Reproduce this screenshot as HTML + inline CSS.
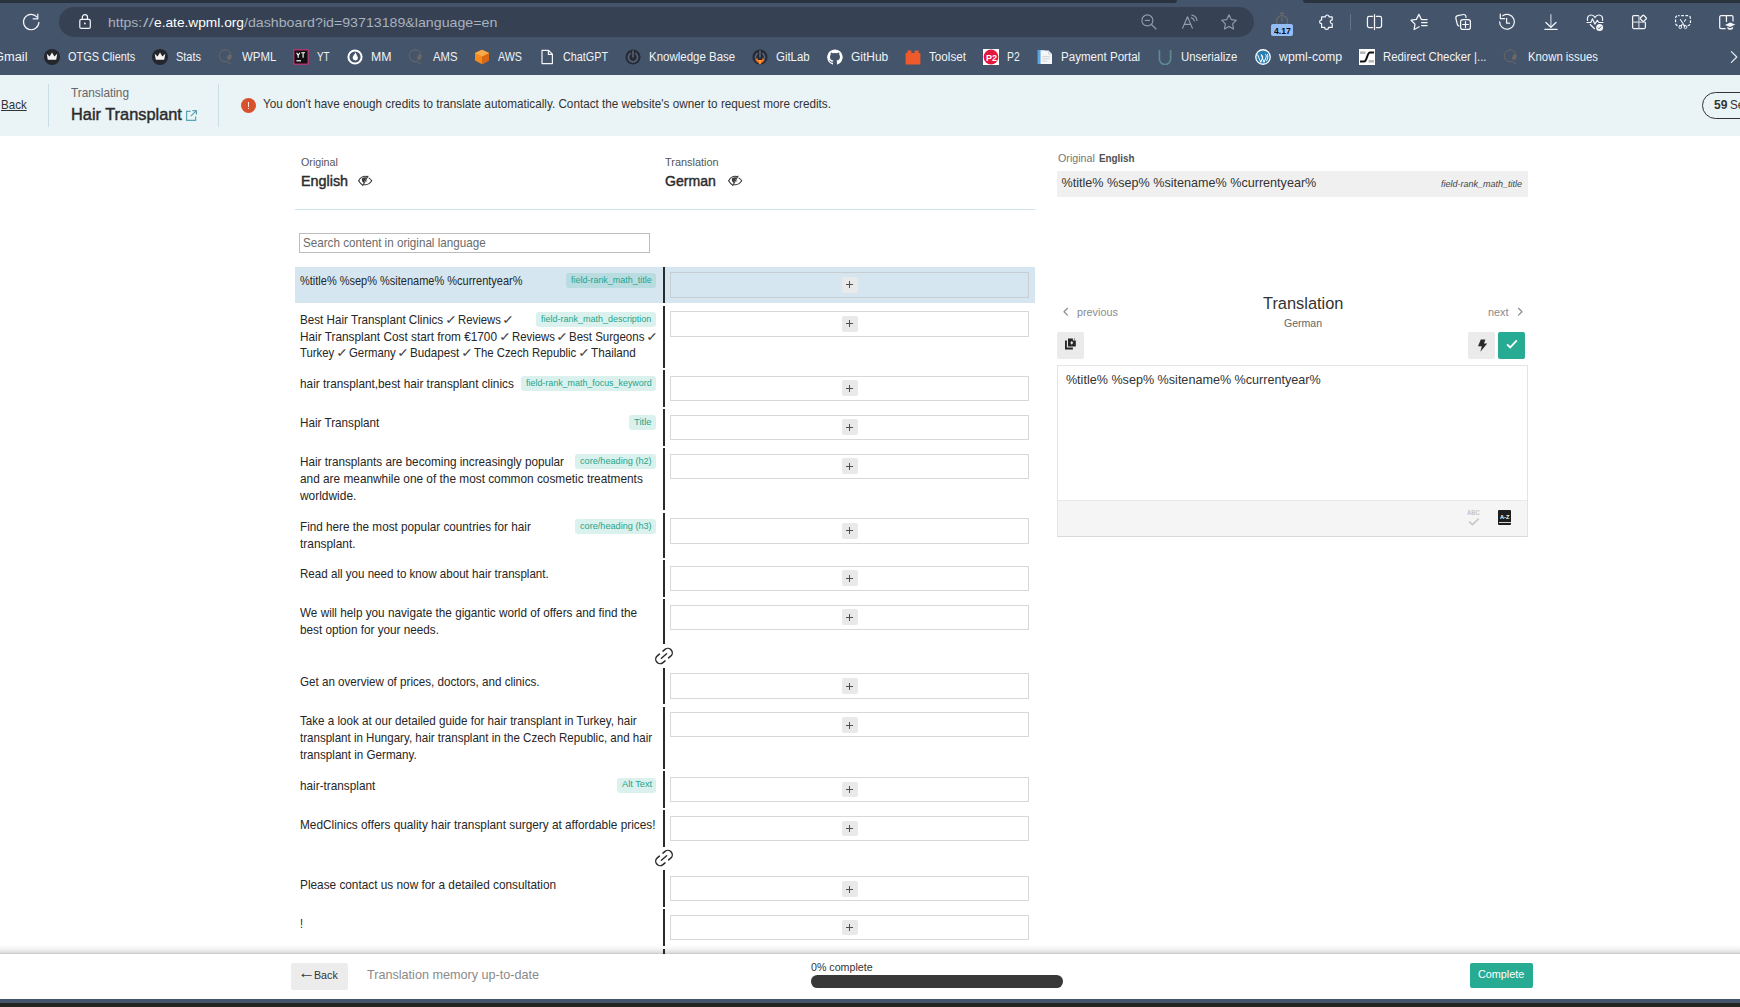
<!DOCTYPE html>
<html lang="en"><head><meta charset="utf-8"><title>Advanced Translation Editor - Hair Transplant</title>
<style>
html,body{margin:0;padding:0;}
body{width:1740px;height:1007px;overflow:hidden;position:relative;background:#fff;font-family:"Liberation Sans", "DejaVu Sans", sans-serif;}
#app{position:absolute;left:0;top:0;width:1740px;height:1007px;overflow:hidden;}
#app div, #app svg{position:absolute;box-sizing:border-box;}
#app span.t{position:absolute;white-space:pre;transform-origin:0 0;display:block;}
</style></head><body><div id="app">
<div style="left:0px;top:0px;width:1740px;height:75px;background:#44546b;"></div>
<div style="left:0px;top:0px;width:1177px;height:3px;background:#293340;border-radius:0 0 6px 0;"></div>
<div style="left:1303px;top:0px;width:437px;height:3px;background:#293340;border-radius:0 0 0 6px;"></div>
<div style="left:59px;top:7px;width:1195px;height:30px;background:#364254;border-radius:15px;"></div>
<svg style="left:19px;top:10px;" width="24" height="24" viewBox="0 0 24 24" fill="none"><path d="M18.1 7.05 A7.7 7.7 0 1 0 19.9 12.3" stroke="#f4f6f9" stroke-width="1.2" stroke-linecap="round"/><path d="M18.8 4.1 V8.85 H14.1" stroke="#f4f6f9" stroke-width="1.2" stroke-linecap="round" stroke-linejoin="round"/></svg>
<svg style="left:77px;top:12px;" width="16" height="20" viewBox="0 0 16 20" fill="none"><rect x="2.8" y="7.45" width="10.5" height="8.95" rx="1.5" stroke="#f4f6f9" stroke-width="1.2"/><path d="M5.3 7.4 V5.3 a2.6 2.6 0 0 1 5.2 0 V7.4" stroke="#f4f6f9" stroke-width="1.2"/><circle cx="7.9" cy="11.5" r="0.9" fill="#f4f6f9"/></svg>
<svg style="left:1139px;top:12px;" width="20" height="20" viewBox="0 0 20 20" fill="none"><circle cx="8.4" cy="8.4" r="5.5" stroke="#959eab" stroke-width="1.1"/><path d="M12.5 12.5 L17 17" stroke="#959eab" stroke-width="1.15" stroke-linecap="round"/><path d="M5.8 8.4 H11" stroke="#959eab" stroke-width="1.1"/></svg>
<svg style="left:1180px;top:12px;" width="20" height="20" viewBox="0 0 20 20" fill="none"><path d="M2.6 16.2 L7.5 4.8 L12.4 16.2 M4.3 12.4 H10.7" stroke="#959eab" stroke-width="1.1" stroke-linejoin="round" stroke-linecap="round"/><path d="M11.2 5.8 a3.8 3.8 0 0 1 3 3.2 M11.8 3 a6.6 6.6 0 0 1 5.2 5.6" stroke="#959eab" stroke-width="1.1" stroke-linecap="round"/></svg>
<svg style="left:1219px;top:12px;" width="20" height="20" viewBox="0 0 20 20" fill="none"><path d="M10 2.8 L12.2 7.6 L17.4 8.2 L13.6 11.8 L14.6 17 L10 14.4 L5.4 17 L6.4 11.8 L2.6 8.2 L7.8 7.6 Z" stroke="#959eab" stroke-width="1.1" stroke-linejoin="round"/></svg>
<svg style="left:1273px;top:11px;" width="18" height="16" viewBox="0 0 18 16" fill="none"><circle cx="9" cy="10.2" r="5.6" stroke="#6b6a6c" stroke-width="1.2"/><path d="M9 2.4 V4.4 M7.4 2.2 H10.6 M9 6.8 V10.2" stroke="#6b6a6c" stroke-width="1.2" stroke-linecap="round"/></svg>
<div style="left:1271px;top:24px;width:22.4px;height:11.8px;background:#94bdf6;border-radius:2px;"></div>
<svg style="left:1316px;top:12px;" width="20" height="20" viewBox="0 0 20 20" fill="none"><path d="M5.6 4.9 H9.3 a1.9 1.9 0 1 1 3.8 0 H16.2 V7.9 a1.9 1.9 0 1 0 0 3.8 V15.4 H12.5 a1.9 1.9 0 1 1 -3.8 0 H5.6 V11.7 a1.9 1.9 0 1 1 0 -3.8 Z" stroke="#f4f6f9" stroke-width="1.2" stroke-linejoin="round"/></svg>
<div style="left:1350px;top:14px;width:1px;height:16px;background:#66748a;"></div>
<svg style="left:1364px;top:12px;" width="21" height="20" viewBox="0 0 21 20" fill="none"><path d="M8.6 4.45 H5.2 a1.75 1.75 0 0 0 -1.75 1.75 v7.6 a1.75 1.75 0 0 0 1.75 1.75 H8.6 M12.4 4.45 h3.4 a1.75 1.75 0 0 1 1.75 1.75 v7.6 a1.75 1.75 0 0 1 -1.75 1.75 H12.4 M10.5 2.5 V17.5" stroke="#f4f6f9" stroke-width="1.25" stroke-linecap="round"/></svg>
<svg style="left:1409px;top:12px;" width="21" height="20" viewBox="0 0 21 20" fill="none"><path d="M18.1 7.5 H12.4 L9.9 2.4 L7.4 7.4 L2.1 8.2 L6 12.1 L5.1 17.5 L10.2 14.8" stroke="#f4f6f9" stroke-width="1.25" stroke-linejoin="round" stroke-linecap="round"/><path d="M12.6 10.6 H18.1 M12.6 13.6 H18.1" stroke="#f4f6f9" stroke-width="1.25" stroke-linecap="round"/></svg>
<svg style="left:1453px;top:12px;" width="21" height="20" viewBox="0 0 21 20" fill="none"><rect x="7.6" y="7.6" width="9.8" height="9.8" rx="2.2" stroke="#f4f6f9" stroke-width="1.25"/><path d="M12.5 9.6 v5.8 M9.6 12.5 h5.8" stroke="#f4f6f9" stroke-width="1.2" stroke-linecap="round"/><path d="M13 5.6 C13 3.5 12.2 2.3 10.5 2.5 L4.7 3.7 C3.1 4.1 2.6 5.1 2.9 6.5 L4.2 12 C4.5 13.3 5 13.8 5.9 13.9" stroke="#f4f6f9" stroke-width="1.2" stroke-linecap="round"/></svg>
<svg style="left:1497px;top:12px;" width="20" height="20" viewBox="0 0 20 20" fill="none"><path d="M5.76 3.74 A7.4 7.4 0 1 1 2.6 9.8" stroke="#f4f6f9" stroke-width="1.25" stroke-linecap="round"/><path d="M3.3 2.2 V6.6 H7.7" stroke="#f4f6f9" stroke-width="1.25" stroke-linecap="round" stroke-linejoin="round"/><path d="M9.6 6.3 V11.2 H12.5" stroke="#f4f6f9" stroke-width="1.25" stroke-linecap="round" stroke-linejoin="round"/></svg>
<svg style="left:1541px;top:12px;" width="20" height="20" viewBox="0 0 20 20" fill="none"><path d="M9.9 2.7 V15" stroke="#b9c0cb" stroke-width="1.3" stroke-linecap="round"/><path d="M4.9 10.5 L9.9 15.3 L15 10.5 M3.9 17.4 H16.1" stroke="#f4f6f9" stroke-width="1.25" stroke-linecap="round" stroke-linejoin="round"/></svg>
<svg style="left:1585px;top:12px;" width="21" height="20" viewBox="0 0 21 20" fill="none"><path d="M2.5 8.4 C1.9 5 3.6 3 6.1 3 C7.8 3 9.2 3.9 10 5.4 C10.8 3.9 12.2 3 13.9 3 C16.4 3 18.1 5 17.5 8.4" stroke="#f4f6f9" stroke-width="1.2" stroke-linecap="round"/><path d="M2 10.5 H5.9 L7.5 6.8 L9.8 12.1 L12.3 8.4 L13.9 10.5 H18" stroke="#f4f6f9" stroke-width="1.2" stroke-linecap="round" stroke-linejoin="round"/><path d="M5.2 12.55 L9.5 16.7" stroke="#f4f6f9" stroke-width="1.2" stroke-linecap="round"/><circle cx="14.6" cy="15.5" r="3.5" fill="#f4f6f9"/><path d="M13 15.6 L14.1 16.7 L16.2 14.4" stroke="#44546b" stroke-width="1"/></svg>
<svg style="left:1629px;top:12px;" width="21" height="20" viewBox="0 0 21 20" fill="none"><path d="M9.9 3.7 H4.8 a1.2 1.2 0 0 0 -1.2 1.2 V15.3 a1.2 1.2 0 0 0 1.2 1.2 H15.2 a1.2 1.2 0 0 0 1.2 -1.2 V10" stroke="#f4f6f9" stroke-width="1.25"/><path d="M9.9 3.7 V16.5 M3.6 10 H16.4" stroke="#c3c9d3" stroke-width="1.25"/><rect x="11.85" y="3.9" width="4.9" height="4.9" rx="0.9" transform="rotate(45 14.3 6.35)" fill="#44546b" stroke="#f4f6f9" stroke-width="1.25"/></svg>
<svg style="left:1673px;top:12px;" width="21" height="20" viewBox="0 0 21 20" fill="none"><rect x="2.55" y="3.5" width="14.9" height="10.1" rx="2.6" stroke="#f4f6f9" stroke-width="1.25" stroke-dasharray="2.7 1.55" stroke-dashoffset="1.2"/><circle cx="7.3" cy="15.2" r="1.35" fill="#44546b" stroke="#f4f6f9" stroke-width="1"/><circle cx="12.5" cy="15.2" r="1.35" fill="#44546b" stroke="#f4f6f9" stroke-width="1"/><path d="M7.2 7.3 L11.9 14.2 M12.75 7.3 L11.3 9.6 M9.5 12.2 L8 14.2" stroke="#f4f6f9" stroke-width="1.1"/></svg>
<svg style="left:1717px;top:12px;" width="23" height="20" viewBox="0 0 23 20" fill="none"><path d="M9.45 3.7 V10 M9.45 3.7 H4 a1.3 1.3 0 0 0 -1.3 1.3 V15.2 a1.3 1.3 0 0 0 1.3 1.3 H8.6 M9.45 3.7 H14.7 a1.3 1.3 0 0 1 1.3 1.3 V9.6" stroke="#f4f6f9" stroke-width="1.25"/><path d="M8 13 L13.1 10.5 L18.3 12.6 L13.1 14.9 Z" fill="#f4f6f9"/><path d="M10.3 14.9 v1.3 c1.2 2.2 4.6 2.2 5.8 0 v-1.3 L13.1 16.2Z" fill="#f4f6f9"/></svg>
<svg style="left:43.8px;top:49px;" width="16" height="16" viewBox="0 0 16 16" fill="none"><circle cx="8" cy="8" r="8" fill="#23262b"/><path d="M2.7 4.7 L5.6 7.5 L8 3.5 L10.4 7.5 L13.3 4.7 L12.2 10.8 H3.8 Z" fill="#f4f4f4"/></svg>
<svg style="left:152px;top:49px;" width="16" height="16" viewBox="0 0 16 16" fill="none"><circle cx="8" cy="8" r="8" fill="#23262b"/><path d="M2.7 4.7 L5.6 7.5 L8 3.5 L10.4 7.5 L13.3 4.7 L12.2 10.8 H3.8 Z" fill="#f4f4f4"/></svg>
<svg style="left:218px;top:49px;" width="16" height="16" viewBox="0 0 16 16" fill="none"><path d="M12.7 4.2 A6 6 0 1 0 9.4 12.3 L11.4 14.6 L12.6 14.2" stroke="#6b6866" stroke-width="1" stroke-linecap="round"/><ellipse cx="11.5" cy="8" rx="2.1" ry="3.1" transform="rotate(22 11.5 8)" fill="#6b6866"/></svg>
<svg style="left:408px;top:49px;" width="16" height="16" viewBox="0 0 16 16" fill="none"><path d="M12.7 4.2 A6 6 0 1 0 9.4 12.3 L11.4 14.6 L12.6 14.2" stroke="#6b6866" stroke-width="1" stroke-linecap="round"/><ellipse cx="11.5" cy="8" rx="2.1" ry="3.1" transform="rotate(22 11.5 8)" fill="#6b6866"/></svg>
<svg style="left:1503px;top:49px;" width="16" height="16" viewBox="0 0 16 16" fill="none"><path d="M12.7 4.2 A6 6 0 1 0 9.4 12.3 L11.4 14.6 L12.6 14.2" stroke="#6b6866" stroke-width="1" stroke-linecap="round"/><ellipse cx="11.5" cy="8" rx="2.1" ry="3.1" transform="rotate(22 11.5 8)" fill="#6b6866"/></svg>
<svg style="left:293px;top:49px;" width="16" height="16" viewBox="0 0 16 16" fill="none"><rect x="0.9" y="0.9" width="14.2" height="14.2" fill="#111" stroke="#ee2f7c" stroke-width="1"/><path d="M3.6 3.8 L5.2 6.4 L6.8 3.8 M5.2 6.4 V8.8 M8.2 3.8 H12 M10.1 3.8 V8.8" stroke="#fff" stroke-width="1.1"/><path d="M3.4 11.8 H8" stroke="#fff" stroke-width="1.2"/></svg>
<svg style="left:346.5px;top:49px;" width="16" height="16" viewBox="0 0 16 16" fill="none"><circle cx="8" cy="8" r="6.6" stroke="#fff" stroke-width="2"/><path d="M8.6 3.2 C7.6 5.4 6 6.6 5.6 8.6 a2.7 2.7 0 0 0 5.3 0.8 C11.2 7.6 9.4 6.2 8.6 3.2Z" fill="#fff"/></svg>
<svg style="left:474px;top:49px;" width="16" height="16" viewBox="0 0 16 16" fill="none"><path d="M8 0.8 L15 4 V11.6 L8 15.2 L1 11.6 V4 Z" fill="#f58a1f"/><path d="M8 7.4 L15 4 V11.6 L8 15.2 Z" fill="#d86613"/><path d="M8 7.4 L1 4 L8 0.8 L15 4 Z" fill="#f9a94a"/></svg>
<svg style="left:538.5px;top:49px;" width="16" height="16" viewBox="0 0 16 16" fill="none"><path d="M3 1.4 H9.6 L13.4 5.2 V14.6 H3 Z M9.4 1.6 V5.4 H13.2" stroke="#f3f5f8" stroke-width="1.2" stroke-linejoin="round"/></svg>
<svg style="left:625px;top:49px;" width="16" height="16" viewBox="0 0 16 16" fill="none"><circle cx="8" cy="8" r="7.6" fill="#262b35"/><path d="M5.2 4.6 a4.6 4.6 0 1 0 5.6 0" stroke="#57627a" stroke-width="1.6" stroke-linecap="round"/><path d="M8 2.4 V8" stroke="#57627a" stroke-width="1.6" stroke-linecap="round"/></svg>
<svg style="left:752px;top:49px;" width="16" height="16" viewBox="0 0 16 16" fill="none"><circle cx="8" cy="8" r="7.6" fill="#262b35"/><path d="M5.2 4.6 a4.6 4.6 0 1 0 5.6 0" stroke="#57627a" stroke-width="1.6" stroke-linecap="round"/><path d="M8 2.4 V8" stroke="#57627a" stroke-width="1.6" stroke-linecap="round"/><path d="M8 15.4 L3.6 11.6 L5 8.4 L6.2 11 H9.8 L11 8.4 L12.4 11.6 Z" fill="#f26b26"/><path d="M8 15.4 L6.2 11 H9.8 Z" fill="#fca326"/></svg>
<svg style="left:827px;top:49px;" width="16" height="16" viewBox="0 0 16 16" fill="none"><path d="M8 0.4 a7.8 7.8 0 0 0 -2.5 15.2 c0.4 0.07 0.53 -0.17 0.53 -0.38 v-1.5 c-2.2 0.47 -2.63 -0.93 -2.63 -0.93 c-0.36 -0.9 -0.87 -1.15 -0.87 -1.15 c-0.7 -0.48 0.06 -0.47 0.06 -0.47 c0.78 0.05 1.2 0.8 1.2 0.8 c0.7 1.18 1.82 0.84 2.27 0.64 c0.07 -0.5 0.27 -0.84 0.5 -1.04 c-1.73 -0.2 -3.55 -0.87 -3.55 -3.85 c0 -0.85 0.3 -1.55 0.8 -2.1 c-0.08 -0.2 -0.35 -1 0.08 -2.07 c0 0 0.65 -0.2 2.15 0.8 a7.4 7.4 0 0 1 3.9 0 c1.5 -1 2.15 -0.8 2.15 -0.8 c0.43 1.07 0.16 1.87 0.08 2.07 c0.5 0.55 0.8 1.25 0.8 2.1 c0 3 -1.83 3.65 -3.57 3.85 c0.28 0.24 0.53 0.72 0.53 1.45 v2.15 c0 0.2 0.14 0.46 0.54 0.38 A7.8 7.8 0 0 0 8 0.4 Z" fill="#fff"/></svg>
<svg style="left:905px;top:49px;" width="16" height="16" viewBox="0 0 16 16" fill="none"><path d="M0.6 4 H2.4 V1.4 H6.4 V4 H9.6 V1.4 H13.6 V4 H15.4 V15.4 H0.6 Z" fill="#ee5a2b"/></svg>
<svg style="left:983px;top:49px;" width="16" height="16" viewBox="0 0 16 16" fill="none"><rect x="0" y="0" width="16" height="16" fill="#fff"/><circle cx="8" cy="8" r="7.4" fill="#e4173f"/></svg>
<svg style="left:1037px;top:49px;" width="16" height="16" viewBox="0 0 16 16" fill="none"><path d="M0.8 1 H8 V15 H0.8 Z" fill="#8fc0ea"/><path d="M3.4 1.6 H11.6 L15 5 V15 H3.4 Z" fill="#f5f6f8"/><path d="M11.6 1.6 V5 H15" stroke="#c6ccd6" stroke-width="0.8"/><path d="M5.4 7.6 H12.6 M5.4 9.8 H12.6 M5.4 12 H10" stroke="#cfd4dc" stroke-width="1"/><path d="M0.8 1 H3.4 V15 H0.8Z" fill="#5aa4e0"/></svg>
<svg style="left:1157px;top:49px;" width="16" height="16" viewBox="0 0 16 16" fill="none"><path d="M2.4 1 V10 a5.6 5.6 0 0 0 11.2 0 V1" stroke="#5e8b92" stroke-width="1.7"/></svg>
<svg style="left:1254.5px;top:49px;" width="16" height="16" viewBox="0 0 16 16" fill="none"><circle cx="8" cy="8" r="7.9" fill="#fff"/><circle cx="8" cy="8" r="6.6" fill="#2a7db0"/><path d="M2.6 5.6 L5.8 13.4 L7.8 8 L6.6 5.6 M6.2 5.6 L9 13.4 L11 8.4 C11.8 6.6 11 5.4 10.2 5.2 M12.4 5 C13.4 7 12.6 9 11.6 12" stroke="#fff" stroke-width="1"/></svg>
<svg style="left:1359px;top:49px;" width="16" height="16" viewBox="0 0 16 16" fill="none"><rect width="16" height="16" fill="#fff"/><rect x="1" y="2.4" width="5.4" height="2.6" fill="#b9b9b9"/><rect x="9.6" y="11" width="5.4" height="2.6" fill="#b9b9b9"/><path d="M1 12.6 H5 C8 12.6 8 3.6 11 3.6 H15" stroke="#111" stroke-width="2"/></svg>
<svg style="left:1729px;top:49px;" width="10" height="16" viewBox="0 0 10 16" fill="none"><path d="M2.4 2.6 L7.8 8 L2.4 13.4" stroke="#e4e8ee" stroke-width="1.3" stroke-linecap="round" stroke-linejoin="round"/></svg>
<div style="left:0px;top:75px;width:1740px;height:61px;background:#eaf3f6;"></div>
<div style="left:48px;top:84px;width:1px;height:42.5px;background:#c9dee5;"></div>
<svg style="left:185px;top:109px;" width="13" height="13" viewBox="0 0 13 13" fill="none"><path d="M5.6 2.4 H1.6 V11.4 H10.6 V7.4" stroke="#5aa3b3" stroke-width="1.2"/><path d="M7.4 1.6 H11.4 V5.6 M11.2 1.8 L5.8 7.2" stroke="#5aa3b3" stroke-width="1.2"/></svg>
<div style="left:218px;top:84px;width:1px;height:42.5px;background:#c9dee5;"></div>
<div style="left:240.8px;top:97.8px;width:15px;height:15px;background:#d9512c;border-radius:50%;"></div>
<div style="left:247.8px;top:102px;width:1px;height:4.8px;background:#fde9e3;"></div>
<div style="left:247.8px;top:108px;width:1px;height:1.2px;background:#fde9e3;"></div>
<div style="left:1702px;top:92px;width:60px;height:27px;background:#eaf3f6;border:1px solid #333;border-radius:13.5px;"></div>
<svg style="left:357.6px;top:175px;" width="15" height="12" viewBox="0 0 15 12" fill="none"><g stroke="#3a3a3a" stroke-width="1.05" stroke-linecap="round" fill="none"><path d="M0.7 5.7 C2.4 2.7 5 1.3 7.2 1.3 C8.2 1.3 9 1.45 9.7 1.7"/><path d="M0.7 5.7 C1.7 7.6 3 9.1 4.7 10"/><path d="M11 3.1 C12.2 3.8 13.1 4.7 13.7 5.7 C12.3 8 10 9.5 7.4 9.7 C7 9.75 6.6 9.75 6.2 9.7"/><path d="M10 1.1 L4.8 10.6"/></g><path d="M3.9 3.6 C5 2.5 7 2 8.7 2.2 L5.5 8 C4.2 7 3.5 5.2 3.9 3.6 Z" fill="#3a3a3a"/><path d="M8.9 5 C9 5.9 8.7 6.6 8.2 7.2" stroke="#9a8a8a" stroke-width="0.8" fill="none"/></svg>
<svg style="left:728.4px;top:175px;" width="15" height="12" viewBox="0 0 15 12" fill="none"><g stroke="#3a3a3a" stroke-width="1.05" stroke-linecap="round" fill="none"><path d="M0.7 5.7 C2.4 2.7 5 1.3 7.2 1.3 C8.2 1.3 9 1.45 9.7 1.7"/><path d="M0.7 5.7 C1.7 7.6 3 9.1 4.7 10"/><path d="M11 3.1 C12.2 3.8 13.1 4.7 13.7 5.7 C12.3 8 10 9.5 7.4 9.7 C7 9.75 6.6 9.75 6.2 9.7"/><path d="M10 1.1 L4.8 10.6"/></g><path d="M3.9 3.6 C5 2.5 7 2 8.7 2.2 L5.5 8 C4.2 7 3.5 5.2 3.9 3.6 Z" fill="#3a3a3a"/><path d="M8.9 5 C9 5.9 8.7 6.6 8.2 7.2" stroke="#9a8a8a" stroke-width="0.8" fill="none"/></svg>
<div style="left:295px;top:209px;width:740px;height:1px;background:#cfe3ec;"></div>
<div style="left:299px;top:233px;width:351px;height:20px;background:#fff;border:1px solid #bdbdbd;"></div>
<div style="left:295px;top:267.0px;width:740px;height:36px;background:#d5e6f0;"></div>
<div style="left:663px;top:267.0px;width:2px;height:36px;background:#2a2a2a;"></div>
<div style="left:670px;top:272.2px;width:359px;height:25.6px;background:transparent;border:1px solid #c6cdd3;"></div>
<div style="left:842px;top:277.0px;width:16px;height:15.6px;background:#e9e9e9;border-radius:2px;"></div>
<div style="left:845.6px;top:284.4px;width:7px;height:1px;background:#505050;"></div>
<div style="left:848.6px;top:281.4px;width:1px;height:7px;background:#505050;"></div>
<div style="left:566px;top:273.0px;width:89.79999999999995px;height:15px;background:rgba(40,173,149,0.17);border-radius:3px;"></div>
<div style="left:663px;top:306.0px;width:2px;height:61.7px;background:#2a2a2a;"></div>
<div style="left:670px;top:311.2px;width:359px;height:25.6px;background:#fff;border:1px solid #d8d8d8;"></div>
<div style="left:842px;top:316.0px;width:16px;height:15.6px;background:#e9e9e9;border-radius:2px;"></div>
<div style="left:845.6px;top:323.4px;width:7px;height:1px;background:#505050;"></div>
<div style="left:848.6px;top:320.4px;width:1px;height:7px;background:#505050;"></div>
<div style="left:536px;top:312.0px;width:119.79999999999995px;height:15px;background:rgba(40,173,149,0.17);border-radius:3px;"></div>
<div style="left:663px;top:370.3px;width:2px;height:36.3px;background:#2a2a2a;"></div>
<div style="left:670px;top:375.5px;width:359px;height:25.6px;background:#fff;border:1px solid #d8d8d8;"></div>
<div style="left:842px;top:380.3px;width:16px;height:15.6px;background:#e9e9e9;border-radius:2px;"></div>
<div style="left:845.6px;top:387.7px;width:7px;height:1px;background:#505050;"></div>
<div style="left:848.6px;top:384.7px;width:1px;height:7px;background:#505050;"></div>
<div style="left:521px;top:376.3px;width:134.79999999999995px;height:15px;background:rgba(40,173,149,0.17);border-radius:3px;"></div>
<div style="left:663px;top:409.2px;width:2px;height:36.7px;background:#2a2a2a;"></div>
<div style="left:670px;top:415.3px;width:359px;height:24.6px;background:#fff;border:1px solid #d8d8d8;"></div>
<div style="left:842px;top:419.2px;width:16px;height:15.6px;background:#e9e9e9;border-radius:2px;"></div>
<div style="left:845.6px;top:426.59999999999997px;width:7px;height:1px;background:#505050;"></div>
<div style="left:848.6px;top:423.59999999999997px;width:1px;height:7px;background:#505050;"></div>
<div style="left:629px;top:415.2px;width:26.799999999999955px;height:15px;background:rgba(40,173,149,0.17);border-radius:3px;"></div>
<div style="left:663px;top:448.3px;width:2px;height:61.5px;background:#2a2a2a;"></div>
<div style="left:670px;top:453.5px;width:359px;height:25.6px;background:#fff;border:1px solid #d8d8d8;"></div>
<div style="left:842px;top:458.3px;width:16px;height:15.6px;background:#e9e9e9;border-radius:2px;"></div>
<div style="left:845.6px;top:465.7px;width:7px;height:1px;background:#505050;"></div>
<div style="left:848.6px;top:462.7px;width:1px;height:7px;background:#505050;"></div>
<div style="left:575px;top:454.3px;width:80.79999999999995px;height:15px;background:rgba(40,173,149,0.17);border-radius:3px;"></div>
<div style="left:663px;top:513.0px;width:2px;height:45.2px;background:#2a2a2a;"></div>
<div style="left:670px;top:518.2px;width:359px;height:25.6px;background:#fff;border:1px solid #d8d8d8;"></div>
<div style="left:842px;top:523.0px;width:16px;height:15.6px;background:#e9e9e9;border-radius:2px;"></div>
<div style="left:845.6px;top:530.4px;width:7px;height:1px;background:#505050;"></div>
<div style="left:848.6px;top:527.4px;width:1px;height:7px;background:#505050;"></div>
<div style="left:575px;top:519.0px;width:80.79999999999995px;height:15px;background:rgba(40,173,149,0.17);border-radius:3px;"></div>
<div style="left:663px;top:560.3px;width:2px;height:36.9px;background:#2a2a2a;"></div>
<div style="left:670px;top:565.5px;width:359px;height:25.6px;background:#fff;border:1px solid #d8d8d8;"></div>
<div style="left:842px;top:570.3px;width:16px;height:15.6px;background:#e9e9e9;border-radius:2px;"></div>
<div style="left:845.6px;top:577.6999999999999px;width:7px;height:1px;background:#505050;"></div>
<div style="left:848.6px;top:574.6999999999999px;width:1px;height:7px;background:#505050;"></div>
<div style="left:663px;top:599.4px;width:2px;height:44.4px;background:#2a2a2a;"></div>
<div style="left:670px;top:604.6px;width:359px;height:25.6px;background:#fff;border:1px solid #d8d8d8;"></div>
<div style="left:842px;top:609.4px;width:16px;height:15.6px;background:#e9e9e9;border-radius:2px;"></div>
<div style="left:845.6px;top:616.8px;width:7px;height:1px;background:#505050;"></div>
<div style="left:848.6px;top:613.8px;width:1px;height:7px;background:#505050;"></div>
<div style="left:663px;top:668.1px;width:2px;height:35.8px;background:#2a2a2a;"></div>
<div style="left:670px;top:673.3000000000001px;width:359px;height:25.6px;background:#fff;border:1px solid #d8d8d8;"></div>
<div style="left:842px;top:678.1px;width:16px;height:15.6px;background:#e9e9e9;border-radius:2px;"></div>
<div style="left:845.6px;top:685.5px;width:7px;height:1px;background:#505050;"></div>
<div style="left:848.6px;top:682.5px;width:1px;height:7px;background:#505050;"></div>
<div style="left:663px;top:707.3px;width:2px;height:61.7px;background:#2a2a2a;"></div>
<div style="left:670px;top:711.9px;width:359px;height:25.6px;background:#fff;border:1px solid #d8d8d8;"></div>
<div style="left:842px;top:717.3px;width:16px;height:15.6px;background:#e9e9e9;border-radius:2px;"></div>
<div style="left:845.6px;top:724.6999999999999px;width:7px;height:1px;background:#505050;"></div>
<div style="left:848.6px;top:721.6999999999999px;width:1px;height:7px;background:#505050;"></div>
<div style="left:663px;top:770.9px;width:2px;height:37px;background:#2a2a2a;"></div>
<div style="left:670px;top:776.7px;width:359px;height:25.6px;background:#fff;border:1px solid #d8d8d8;"></div>
<div style="left:842px;top:781.5px;width:16px;height:15.6px;background:#e9e9e9;border-radius:2px;"></div>
<div style="left:845.6px;top:788.9px;width:7px;height:1px;background:#505050;"></div>
<div style="left:848.6px;top:785.9px;width:1px;height:7px;background:#505050;"></div>
<div style="left:617px;top:777.5px;width:38.799999999999955px;height:15px;background:rgba(40,173,149,0.17);border-radius:3px;"></div>
<div style="left:663px;top:810.2px;width:2px;height:36.6px;background:#2a2a2a;"></div>
<div style="left:670px;top:815.8000000000001px;width:359px;height:25.6px;background:#fff;border:1px solid #d8d8d8;"></div>
<div style="left:842px;top:820.6px;width:16px;height:15.6px;background:#e9e9e9;border-radius:2px;"></div>
<div style="left:845.6px;top:828.0px;width:7px;height:1px;background:#505050;"></div>
<div style="left:848.6px;top:825.0px;width:1px;height:7px;background:#505050;"></div>
<div style="left:663px;top:869.8px;width:2px;height:36.8px;background:#2a2a2a;"></div>
<div style="left:670px;top:876.4000000000001px;width:359px;height:24.8px;background:#fff;border:1px solid #d8d8d8;"></div>
<div style="left:842px;top:881.2px;width:16px;height:15.6px;background:#e9e9e9;border-radius:2px;"></div>
<div style="left:845.6px;top:888.6px;width:7px;height:1px;background:#505050;"></div>
<div style="left:848.6px;top:885.6px;width:1px;height:7px;background:#505050;"></div>
<div style="left:663px;top:908.6px;width:2px;height:37.1px;background:#2a2a2a;"></div>
<div style="left:670px;top:914.9000000000001px;width:359px;height:25.6px;background:#fff;border:1px solid #d8d8d8;"></div>
<div style="left:842px;top:919.7px;width:16px;height:15.6px;background:#e9e9e9;border-radius:2px;"></div>
<div style="left:845.6px;top:927.1px;width:7px;height:1px;background:#505050;"></div>
<div style="left:848.6px;top:924.1px;width:1px;height:7px;background:#505050;"></div>
<div style="left:663px;top:948.7px;width:2px;height:36px;background:#2a2a2a;"></div>
<div style="left:670px;top:953.9000000000001px;width:359px;height:25.6px;background:#fff;border:1px solid #d8d8d8;"></div>
<div style="left:842px;top:958.7px;width:16px;height:15.6px;background:#e9e9e9;border-radius:2px;"></div>
<div style="left:845.6px;top:966.1px;width:7px;height:1px;background:#505050;"></div>
<div style="left:848.6px;top:963.1px;width:1px;height:7px;background:#505050;"></div>
<div style="left:654px;top:645px;width:20px;height:22px;background:#fff;"></div>
<svg style="left:652.9px;top:644.7px;" width="22" height="22" viewBox="0 0 22 22" fill="none"><g stroke="#2b2b2b" stroke-width="1.45" stroke-linecap="round" fill="none" transform="rotate(-40 11 11)"><path d="M8.7 6.6 H5.95 a4.4 4.4 0 0 0 0 8.8 H8.7"/><path d="M13.3 6.6 H16.05 a4.4 4.4 0 0 1 0 8.8 H13.3"/><path d="M7.6 11 H14.4"/></g></svg>
<div style="left:654px;top:847.5px;width:20px;height:22px;background:#fff;"></div>
<svg style="left:652.9px;top:846.5px;" width="22" height="22" viewBox="0 0 22 22" fill="none"><g stroke="#2b2b2b" stroke-width="1.45" stroke-linecap="round" fill="none" transform="rotate(-40 11 11)"><path d="M8.7 6.6 H5.95 a4.4 4.4 0 0 0 0 8.8 H8.7"/><path d="M13.3 6.6 H16.05 a4.4 4.4 0 0 1 0 8.8 H13.3"/><path d="M7.6 11 H14.4"/></g></svg>
<div style="left:1057px;top:171px;width:471px;height:26px;background:#f0f0f0;"></div>
<svg style="left:1061px;top:306px;" width="10" height="12" viewBox="0 0 10 12" fill="none"><path d="M6.5 2.3 L3 5.7 L6.5 9.1" stroke="#8a8a8a" stroke-width="1.2" stroke-linecap="round" stroke-linejoin="round"/></svg>
<svg style="left:1514.6px;top:306px;" width="10" height="12" viewBox="0 0 10 12" fill="none"><path d="M3.5 2.3 L7 5.7 L3.5 9.1" stroke="#8a8a8a" stroke-width="1.2" stroke-linecap="round" stroke-linejoin="round"/></svg>
<div style="left:1057px;top:332px;width:27px;height:26.5px;background:#ebebeb;border-radius:2px;"></div>
<svg style="left:1064px;top:336.5px;" width="13" height="14" viewBox="0 0 13 14" fill="none"><path d="M1 3.5 H2.85 V10.6 H8.9 V12.4 H1 Z" fill="#262626"/><path d="M4 1.45 H8.9 V3.5 H11.8 V9.4 H4 Z" fill="#262626"/><circle cx="10.5" cy="2" r="0.55" fill="#262626"/><path d="M7.75 3.9 L9.2 5.85 L7.75 7.8 L6.3 5.85 Z" fill="#ebebeb"/></svg>
<div style="left:1468px;top:332px;width:27px;height:26.5px;background:#ebebeb;border-radius:2px;"></div>
<svg style="left:1475.5px;top:338.5px;" width="13" height="14" viewBox="0 0 13 14" fill="none"><path d="M4.8 0.56 H9.4 L8 4.58 H11.2 L4.4 12.63 L5.8 7.2 H2 Z" fill="#2a2a2a"/></svg>
<div style="left:1498px;top:332px;width:27px;height:26.5px;background:#28ab93;border-radius:2px;"></div>
<svg style="left:1504.5px;top:338.5px;" width="14" height="13" viewBox="0 0 14 13" fill="none"><path d="M2.1 5.4 L5.2 8.4 L11.8 1.4" stroke="#fff" stroke-width="1.8" stroke-linecap="butt" stroke-linejoin="miter"/></svg>
<div style="left:1057px;top:364.5px;width:471px;height:172px;background:#fff;border:1px solid #e4e4e4;border-bottom:1px solid #d9d9d9;"></div>
<div style="left:1058px;top:500px;width:469px;height:35.5px;background:#f5f5f5;border-top:1px solid #e9e9e9;"></div>
<svg style="left:1467px;top:516.5px;" width="14" height="10" viewBox="0 0 14 10" fill="none"><path d="M2.2 4.6 L5.4 7.6 L11.8 1.6" stroke="#c9c9c9" stroke-width="1.8"/></svg>
<div style="left:1497.8px;top:510px;width:13.4px;height:15.2px;background:#1f1f1f;border-radius:1px;"></div>
<div style="left:1499.4px;top:521.9px;width:11.8px;height:1.2px;background:#d8d8d8;"></div>
<div style="left:0px;top:945px;width:1740px;height:9px;background:linear-gradient(to bottom, rgba(0,0,0,0.005), rgba(0,0,0,0.04) 40%, rgba(0,0,0,0.09) 67%, rgba(0,0,0,0.135) 84%, rgba(0,0,0,0.2) 96%, rgba(0,0,0,0.2));"></div>
<div style="left:0px;top:954px;width:1740px;height:45px;background:#fff;"></div>
<div style="left:291px;top:963px;width:57px;height:26.5px;background:#ececec;border-radius:2px;"></div>
<div style="left:811.2px;top:975.2px;width:251.8px;height:12.8px;background:#383838;border-radius:6.4px;"></div>
<div style="left:1470px;top:963px;width:62.6px;height:25px;background:#28ab93;border-radius:2px;"></div>
<div style="left:0px;top:999px;width:1740px;height:4.5px;background:#44546b;"></div>
<div style="left:0px;top:1003px;width:1740px;height:4px;background:#23241f;"></div>
<span class="t" style="left:108.20px;top:15px;line-height:15px;font-size:13.4px;color:#a9b1bd;transform:scaleX(1.0438);">https:</span>
<span class="t" style="left:142.50px;top:15px;line-height:15px;font-size:13.4px;color:#a9b1bd;transform:scaleX(1.4625);">//</span>
<span class="t" style="left:153.50px;top:15px;line-height:15px;font-size:13.4px;color:#ffffff;transform:scaleX(1.0247);">e.ate.wpml.org</span>
<span class="t" style="left:243.70px;top:15px;line-height:15px;font-size:13.4px;color:#a9b1bd;transform:scaleX(1.0597);">/dashboard?id=93713189&amp;language=en</span>
<span class="t" style="left:1274.00px;top:25px;line-height:11px;font-size:9.6px;color:#0b0f16;font-weight:700;transform:scaleX(0.8990);">4.17</span>
<span class="t" style="left:-6.50px;top:50px;line-height:14px;font-size:12px;color:#f1f3f6;transform:scaleX(1.0688);">Gmail</span>
<span class="t" style="left:68.00px;top:50px;line-height:14px;font-size:12px;color:#f1f3f6;transform:scaleX(0.9093);">OTGS Clients</span>
<span class="t" style="left:175.80px;top:50px;line-height:14px;font-size:12px;color:#f1f3f6;transform:scaleX(0.9138);">Stats</span>
<span class="t" style="left:242.00px;top:50px;line-height:14px;font-size:12px;color:#f1f3f6;transform:scaleX(0.9528);">WPML</span>
<span class="t" style="left:317.00px;top:50px;line-height:14px;font-size:12px;color:#f1f3f6;transform:scaleX(0.8147);">YT</span>
<span class="t" style="left:371.30px;top:50px;line-height:14px;font-size:12px;color:#f1f3f6;transform:scaleX(1.0250);">MM</span>
<span class="t" style="left:433.00px;top:50px;line-height:14px;font-size:12px;color:#f1f3f6;transform:scaleX(0.9417);">AMS</span>
<span class="t" style="left:498.00px;top:50px;line-height:14px;font-size:12px;color:#f1f3f6;transform:scaleX(0.8925);">AWS</span>
<span class="t" style="left:563.00px;top:50px;line-height:14px;font-size:12px;color:#f1f3f6;transform:scaleX(0.8997);">ChatGPT</span>
<span class="t" style="left:649.30px;top:50px;line-height:14px;font-size:12px;color:#f1f3f6;transform:scaleX(0.9569);">Knowledge Base</span>
<span class="t" style="left:775.80px;top:50px;line-height:14px;font-size:12px;color:#f1f3f6;transform:scaleX(0.9531);">GitLab</span>
<span class="t" style="left:850.80px;top:50px;line-height:14px;font-size:12px;color:#f1f3f6;transform:scaleX(0.9957);">GitHub</span>
<span class="t" style="left:929.30px;top:50px;line-height:14px;font-size:12px;color:#f1f3f6;transform:scaleX(0.9729);">Toolset</span>
<span class="t" style="left:1007.30px;top:50px;line-height:14px;font-size:12px;color:#f1f3f6;transform:scaleX(0.8647);">P2</span>
<span class="t" style="left:1061.30px;top:50px;line-height:14px;font-size:12px;color:#f1f3f6;transform:scaleX(0.9653);">Payment Portal</span>
<span class="t" style="left:1181.30px;top:50px;line-height:14px;font-size:12px;color:#f1f3f6;transform:scaleX(0.9468);">Unserialize</span>
<span class="t" style="left:1279.30px;top:50px;line-height:14px;font-size:12px;color:#f1f3f6;transform:scaleX(1.0303);">wpml-comp</span>
<span class="t" style="left:1383.30px;top:50px;line-height:14px;font-size:12px;color:#f1f3f6;transform:scaleX(0.9482);">Redirect Checker |...</span>
<span class="t" style="left:1527.50px;top:50px;line-height:14px;font-size:12px;color:#f1f3f6;transform:scaleX(0.9453);">Known issues</span>
<span class="t" style="left:985.60px;top:52px;line-height:11px;font-size:9.5px;color:#fff;font-weight:700;transform:scaleX(0.9462);">P2</span>
<span class="t" style="left:1.30px;top:98px;line-height:14px;font-size:12.4px;color:#333;transform:scaleX(0.9325);text-decoration:underline;">Back</span>
<span class="t" style="left:71.30px;top:86px;line-height:14px;font-size:12.4px;color:#666;transform:scaleX(0.9535);">Translating</span>
<span class="t" style="left:71.30px;top:104px;line-height:20px;font-size:17.17px;color:#2b2b2b;transform:scaleX(0.9530);-webkit-text-stroke:0.45px #2b2b2b;">Hair Transplant</span>
<span class="t" style="left:263.30px;top:97px;line-height:14px;font-size:12.4px;color:#333;transform:scaleX(0.9458);">You don't have enough credits to translate automatically. Contact the website's owner to request more credits.</span>
<span class="t" style="left:1714.30px;top:98px;line-height:14px;font-size:12.4px;color:#333;font-weight:700;transform:scaleX(0.9728);">59</span>
<span class="t" style="left:1730.00px;top:98px;line-height:14px;font-size:12.4px;color:#333;transform:scaleX(0.9404);">Segments</span>
<span class="t" style="left:300.50px;top:156px;line-height:12px;font-size:11.45px;color:#555;transform:scaleX(0.9354);">Original</span>
<span class="t" style="left:300.50px;top:172px;line-height:17px;font-size:15.26px;color:#2b2b2b;transform:scaleX(0.9403);-webkit-text-stroke:0.45px #2b2b2b;">English</span>
<span class="t" style="left:665.30px;top:156px;line-height:12px;font-size:11.45px;color:#555;transform:scaleX(0.9560);">Translation</span>
<span class="t" style="left:665.30px;top:172px;line-height:17px;font-size:15.26px;color:#2b2b2b;transform:scaleX(0.9240);-webkit-text-stroke:0.45px #2b2b2b;">German</span>
<span class="t" style="left:303.30px;top:236px;line-height:14px;font-size:12.4px;color:#6b6b6b;transform:scaleX(0.9402);">Search content in original language</span>
<span class="t" style="left:300.20px;top:274px;line-height:14px;font-size:12.4px;color:#262626;transform:scaleX(0.8876);">%title% %sep% %sitename% %currentyear%</span>
<span class="t" style="left:570.60px;top:274px;line-height:11px;font-size:9.54px;color:#1fa58c;transform:scaleX(0.9399);">field-rank_math_title</span>
<span class="t" style="left:300.20px;top:313px;line-height:14px;font-size:12.4px;color:#262626;transform:scaleX(0.9409);">Best Hair Transplant Clinics</span>
<span class="t" style="left:444.91px;top:313px;line-height:14px;font-size:12.4px;color:#454545;transform:scaleX(1.1741);">✓</span>
<span class="t" style="left:457.97px;top:313px;line-height:14px;font-size:12.4px;color:#262626;transform:scaleX(0.9148);">Reviews</span>
<span class="t" style="left:502.32px;top:313px;line-height:14px;font-size:12.4px;color:#454545;transform:scaleX(1.1741);">✓</span>
<span class="t" style="left:300.20px;top:330px;line-height:14px;font-size:12.4px;color:#262626;transform:scaleX(0.9536);">Hair Transplant Cost start from €1700</span>
<span class="t" style="left:498.73px;top:330px;line-height:14px;font-size:12.4px;color:#454545;transform:scaleX(1.1741);">✓</span>
<span class="t" style="left:511.79px;top:330px;line-height:14px;font-size:12.4px;color:#262626;transform:scaleX(0.9148);">Reviews</span>
<span class="t" style="left:556.14px;top:330px;line-height:14px;font-size:12.4px;color:#454545;transform:scaleX(1.1741);">✓</span>
<span class="t" style="left:569.20px;top:330px;line-height:14px;font-size:12.4px;color:#262626;transform:scaleX(0.9275);">Best Surgeons</span>
<span class="t" style="left:646.10px;top:330px;line-height:14px;font-size:12.4px;color:#454545;transform:scaleX(1.1741);">✓</span>
<span class="t" style="left:300.20px;top:346px;line-height:14px;font-size:12.4px;color:#262626;transform:scaleX(0.9168);">Turkey</span>
<span class="t" style="left:336.02px;top:346px;line-height:14px;font-size:12.4px;color:#454545;transform:scaleX(1.1741);">✓</span>
<span class="t" style="left:349.08px;top:346px;line-height:14px;font-size:12.4px;color:#262626;transform:scaleX(0.9166);">Germany</span>
<span class="t" style="left:397.31px;top:346px;line-height:14px;font-size:12.4px;color:#454545;transform:scaleX(1.1741);">✓</span>
<span class="t" style="left:410.37px;top:346px;line-height:14px;font-size:12.4px;color:#262626;transform:scaleX(0.9416);">Budapest</span>
<span class="t" style="left:461.18px;top:346px;line-height:14px;font-size:12.4px;color:#454545;transform:scaleX(1.1741);">✓</span>
<span class="t" style="left:474.24px;top:346px;line-height:14px;font-size:12.4px;color:#262626;transform:scaleX(0.9164);">The Czech Republic</span>
<span class="t" style="left:578.00px;top:346px;line-height:14px;font-size:12.4px;color:#454545;transform:scaleX(1.1741);">✓</span>
<span class="t" style="left:591.06px;top:346px;line-height:14px;font-size:12.4px;color:#262626;transform:scaleX(0.9438);">Thailand</span>
<span class="t" style="left:540.60px;top:313px;line-height:11px;font-size:9.54px;color:#1fa58c;transform:scaleX(0.9425);">field-rank_math_description</span>
<span class="t" style="left:300.20px;top:377px;line-height:14px;font-size:12.4px;color:#262626;transform:scaleX(0.9524);">hair transplant,best hair transplant clinics</span>
<span class="t" style="left:525.60px;top:377px;line-height:11px;font-size:9.54px;color:#1fa58c;transform:scaleX(0.9337);">field-rank_math_focus_keyword</span>
<span class="t" style="left:300.20px;top:416px;line-height:14px;font-size:12.4px;color:#262626;transform:scaleX(0.9442);">Hair Transplant</span>
<span class="t" style="left:633.60px;top:416px;line-height:11px;font-size:9.54px;color:#1fa58c;transform:scaleX(0.9894);">Title</span>
<span class="t" style="left:300.20px;top:455px;line-height:14px;font-size:12.4px;color:#262626;transform:scaleX(0.9465);">Hair transplants are becoming increasingly popular</span>
<span class="t" style="left:300.20px;top:472px;line-height:14px;font-size:12.4px;color:#262626;transform:scaleX(0.9554);">and are meanwhile one of the most common cosmetic treatments</span>
<span class="t" style="left:300.20px;top:489px;line-height:14px;font-size:12.4px;color:#262626;transform:scaleX(0.9624);">worldwide.</span>
<span class="t" style="left:579.60px;top:455px;line-height:11px;font-size:9.54px;color:#1fa58c;transform:scaleX(0.9592);">core/heading (h2)</span>
<span class="t" style="left:300.20px;top:520px;line-height:14px;font-size:12.4px;color:#262626;transform:scaleX(0.9466);">Find here the most popular countries for hair</span>
<span class="t" style="left:300.20px;top:537px;line-height:14px;font-size:12.4px;color:#262626;transform:scaleX(0.9598);">transplant.</span>
<span class="t" style="left:579.60px;top:520px;line-height:11px;font-size:9.54px;color:#1fa58c;transform:scaleX(0.9592);">core/heading (h3)</span>
<span class="t" style="left:300.20px;top:567px;line-height:14px;font-size:12.4px;color:#262626;transform:scaleX(0.9355);">Read all you need to know about hair transplant.</span>
<span class="t" style="left:300.20px;top:606px;line-height:14px;font-size:12.4px;color:#262626;transform:scaleX(0.9478);">We will help you navigate the gigantic world of offers and find the</span>
<span class="t" style="left:300.20px;top:623px;line-height:14px;font-size:12.4px;color:#262626;transform:scaleX(0.9473);">best option for your needs.</span>
<span class="t" style="left:300.20px;top:675px;line-height:14px;font-size:12.4px;color:#262626;transform:scaleX(0.9374);">Get an overview of prices, doctors, and clinics.</span>
<span class="t" style="left:300.20px;top:714px;line-height:14px;font-size:12.4px;color:#262626;transform:scaleX(0.9387);">Take a look at our detailed guide for hair transplant in Turkey, hair</span>
<span class="t" style="left:300.20px;top:731px;line-height:14px;font-size:12.4px;color:#262626;transform:scaleX(0.9317);">transplant in Hungary, hair transplant in the Czech Republic, and hair</span>
<span class="t" style="left:300.20px;top:748px;line-height:14px;font-size:12.4px;color:#262626;transform:scaleX(0.9381);">transplant in Germany.</span>
<span class="t" style="left:300.20px;top:779px;line-height:14px;font-size:12.4px;color:#262626;transform:scaleX(0.9505);">hair-transplant</span>
<span class="t" style="left:621.60px;top:778px;line-height:11px;font-size:9.54px;color:#1fa58c;transform:scaleX(0.9713);">Alt Text</span>
<span class="t" style="left:300.20px;top:818px;line-height:14px;font-size:12.4px;color:#262626;transform:scaleX(0.9534);">MedClinics offers quality hair transplant surgery at affordable prices!</span>
<span class="t" style="left:300.20px;top:878px;line-height:14px;font-size:12.4px;color:#262626;transform:scaleX(0.9531);">Please contact us now for a detailed consultation</span>
<span class="t" style="left:300.20px;top:917px;line-height:14px;font-size:12.4px;color:#262626;transform:scaleX(0.8733);">!</span>
<span class="t" style="left:1058.10px;top:152px;line-height:12px;font-size:11.45px;color:#757575;transform:scaleX(0.9354);">Original</span>
<span class="t" style="left:1098.60px;top:152px;line-height:12px;font-size:11.45px;color:#505050;font-weight:700;transform:scaleX(0.8620);">English</span>
<span class="t" style="left:1061.50px;top:176px;line-height:14px;font-size:12.6px;color:#333;">%title% %sep% %sitename% %currentyear%</span>
<span class="t" style="left:1441.00px;top:179px;line-height:10px;font-size:9px;color:#444;font-style:italic;">field-rank_math_title</span>
<span class="t" style="left:1262.70px;top:293px;line-height:20px;font-size:17.17px;color:#333;transform:scaleX(0.9555);">Translation</span>
<span class="t" style="left:1284.00px;top:317px;line-height:12px;font-size:11.45px;color:#666;transform:scaleX(0.9206);">German</span>
<span class="t" style="left:1077.00px;top:306px;line-height:12px;font-size:11.45px;color:#8a8a8a;transform:scaleX(0.9443);">previous</span>
<span class="t" style="left:1488.00px;top:306px;line-height:12px;font-size:11.45px;color:#8a8a8a;transform:scaleX(0.9516);">next</span>
<span class="t" style="left:1065.90px;top:373px;line-height:14px;font-size:12.6px;color:#333;">%title% %sep% %sitename% %currentyear%</span>
<span class="t" style="left:1467.40px;top:509px;line-height:7px;font-size:6.6px;color:#c6c6c6;font-weight:700;transform:scaleX(0.8953);">ABC</span>
<span class="t" style="left:1499.80px;top:514px;line-height:6px;font-size:5.6px;color:#fff;font-weight:700;transform:scaleX(1.0077);">A-Z</span>
<span class="t" style="left:298.00px;top:964px;line-height:17px;font-size:16px;color:#3a3a3a;transform:scaleX(1.0875);">←</span>
<span class="t" style="left:314.10px;top:969px;line-height:12px;font-size:11.45px;color:#333;transform:scaleX(0.9330);">Back</span>
<span class="t" style="left:367.00px;top:967px;line-height:15px;font-size:13.36px;color:#8a8a8a;transform:scaleX(0.9445);">Translation memory up-to-date</span>
<span class="t" style="left:811.40px;top:961px;line-height:12px;font-size:11.45px;color:#333;transform:scaleX(0.9317);">0% complete</span>
<span class="t" style="left:1478.20px;top:968px;line-height:12px;font-size:11.45px;color:#fff;transform:scaleX(0.9464);">Complete</span>
</div></body></html>
